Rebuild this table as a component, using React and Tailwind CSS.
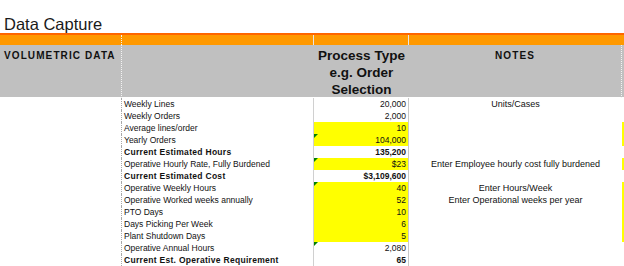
import React from 'react';

const rows = [
  { label: 'Weekly Lines', value: '20,000', note: 'Units/Cases' },
  { label: 'Weekly Orders', value: '2,000' },
  { label: 'Average lines/order', value: '10', input: true },
  { label: 'Yearly Orders', value: '104,000', input: true, flag: true },
  { label: 'Current Estimated Hours', value: '135,200', bold: true },
  {
    label: 'Operative Hourly Rate, Fully Burdened',
    value: '$23',
    input: true,
    flag: true,
    note: 'Enter Employee hourly cost fully burdened'
  },
  { label: 'Current Estimated Cost', value: '$3,109,600', bold: true },
  { label: 'Operative Weekly Hours', value: '40', input: true, flag: true, note: 'Enter Hours/Week' },
  { label: 'Operative Worked weeks annually', value: '52', input: true, note: 'Enter Operational weeks per year' },
  { label: 'PTO Days', value: '10', input: true },
  { label: 'Days Picking Per Week', value: '6', input: true },
  { label: 'Plant Shutdown Days', value: '5', input: true },
  { label: 'Operative Annual Hours', value: '2,080', flag: true },
  { label: 'Current Est. Operative Requirement', value: '65', bold: true }
];

const cols = 'grid grid-cols-[122px_192px_95px_213px_2px]';

const App = () => {
  return (
    <div className="w-[624px] h-[266px] overflow-hidden bg-white text-[#111] font-['Liberation_Sans',Arial,sans-serif]">
      <div className="h-[33px] pt-[14px] pl-[4px] text-[16.5px] leading-[20px] text-[#1a1a1a]">Data Capture</div>

      <div className="h-[2px] bg-[#ff6600]" />

      <div className={`${cols} h-[10px] bg-[#ff9900]`}>
        <div className="border-r border-dotted border-r-[#f4f4f4]" />
        <div className="border-r border-r-[#e6e6e6]" />
        <div className="border-r border-r-[#e6e6e6]" />
        <div />
        <div />
      </div>

      <div className={`${cols} h-[52px] bg-[#c0c0c0]`}>
        <div className="border-r border-dotted border-r-[#f4f4f4] pl-[4px] pt-[5px] text-[10px] leading-[12px] font-bold tracking-[1.1px] whitespace-nowrap">
          VOLUMETRIC DATA
        </div>
        <div />
        <div className="pt-[2px] text-center text-[13.5px] leading-[17px] font-bold whitespace-nowrap">
          Process Type
          <br />
          e.g. Order
          <br />
          Selection
        </div>
        <div className="border-r border-dotted border-r-[#f4f4f4] pt-[5px] text-center text-[10px] leading-[12px] font-bold tracking-[1.1px]">
          NOTES
        </div>
        <div />
      </div>

      <div className="h-[1px]" />

      {rows.map((row, index) => (
        <div key={index} className={`${cols} h-[12px] text-[8.5px] leading-[12px]`}>
          <div className="border-r border-dotted border-r-[#a8a8a8]" />
          <div
            className={`border-r border-r-[#d0d0d0] pl-[2px] whitespace-nowrap ${
              row.bold ? 'font-bold tracking-[0.3px]' : ''
            }`}
          >
            {row.label}
          </div>
          <div
            className={`relative border-r border-r-[#c8c8c8] pr-[2px] text-right ${row.input ? 'bg-[#ffff00]' : ''} ${
              row.bold ? 'font-bold' : ''
            }`}
          >
            {row.flag && (
              <span className="absolute left-0 top-0 h-0 w-0 border-t-[4px] border-r-[4px] border-t-[#008000] border-r-transparent" />
            )}
            {row.value}
          </div>
          <div className="text-center text-[9px] whitespace-nowrap">{row.note}</div>
          <div className={row.input ? 'bg-[#ffff00]' : ''} />
        </div>
      ))}
    </div>
  );
};

export default App;
